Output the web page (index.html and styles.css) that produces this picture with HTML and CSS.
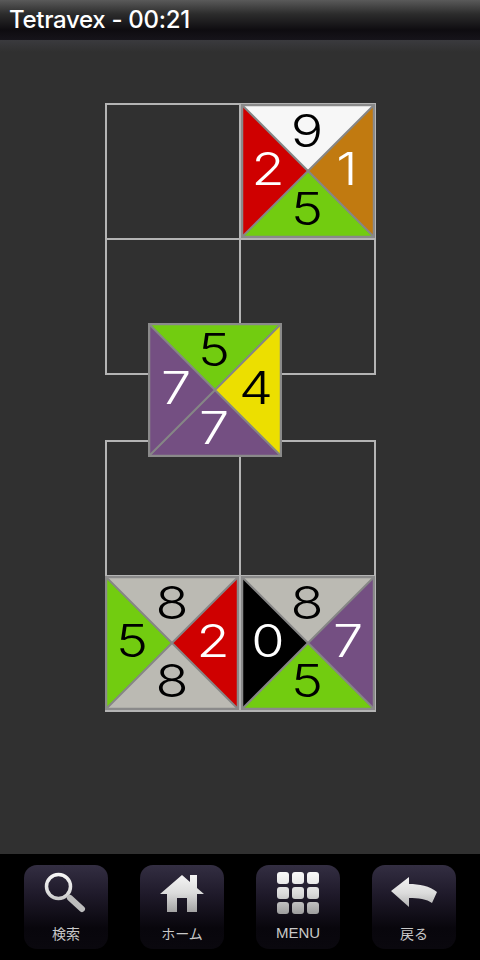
FILE: index.html
```html
<!DOCTYPE html>
<html lang="ja">
<head>
<meta charset="utf-8">
<title>Tetravex</title>
<link rel="stylesheet" href="styles.css">
</head>
<body>
<div class="app">
  <header class="titlebar"><h1 class="title">Tetravex - 00:21</h1></header>
  <main class="game">
    <section class="board">
      <div class="cell"></div>
      <div class="cell">
        <svg class="tile" viewBox="0 0 134 134">
          <polygon class="c-white" points="0,0 134,0 67,67"/><polygon class="c-orange" points="134,0 134,134 67,67"/><polygon class="c-green" points="134,134 0,134 67,67"/><polygon class="c-red" points="0,134 0,0 67,67"/>
          <path class="seam" d="M0 0L134 134M134 0L0 134"/><rect class="edge" x="1" y="1" width="132" height="132"/>
          <text class="n dark" x="66" y="43">9</text><text class="n light" x="106" y="81">1</text><text class="n dark" x="66" y="121">5</text><text class="n light" x="27" y="81">2</text>
        </svg>
      </div>
      <div class="cell"></div>
      <div class="cell"></div>
    </section>
    <section class="board">
      <div class="cell"></div>
      <div class="cell"></div>
      <div class="cell">
        <svg class="tile" viewBox="0 0 134 134">
          <polygon class="c-grey" points="0,0 134,0 67,67"/><polygon class="c-red" points="134,0 134,134 67,67"/><polygon class="c-grey" points="134,134 0,134 67,67"/><polygon class="c-green" points="0,134 0,0 67,67"/>
          <path class="seam" d="M0 0L134 134M134 0L0 134"/><rect class="edge" x="1" y="1" width="132" height="132"/>
          <text class="n dark" x="67" y="43">8</text><text class="n light" x="108" y="81">2</text><text class="n dark" x="67" y="121">8</text><text class="n dark" x="27" y="81">5</text>
        </svg>
      </div>
      <div class="cell">
        <svg class="tile" viewBox="0 0 134 134">
          <polygon class="c-grey" points="0,0 134,0 67,67"/><polygon class="c-purple" points="134,0 134,134 67,67"/><polygon class="c-green" points="134,134 0,134 67,67"/><polygon class="c-black" points="0,134 0,0 67,67"/>
          <path class="seam" d="M0 0L134 134M134 0L0 134"/><rect class="edge" x="1" y="1" width="132" height="132"/>
          <text class="n dark" x="66" y="43">8</text><text class="n light" x="107" y="81">7</text><text class="n dark" x="66" y="121">5</text><text class="n light" x="27" y="81">0</text>
        </svg>
      </div>
    </section>
    <svg class="tile floating" viewBox="0 0 134 134">
      <polygon class="c-green" points="0,0 134,0 67,67"/><polygon class="c-yellow" points="134,0 134,134 67,67"/><polygon class="c-purple" points="134,134 0,134 67,67"/><polygon class="c-purple" points="0,134 0,0 67,67"/>
      <path class="seam" d="M0 0L134 134M134 0L0 134"/><rect class="edge" x="1" y="1" width="132" height="132"/>
      <text class="n dark" x="66" y="43">5</text><text class="n dark" x="108" y="81">4</text><text class="n light" x="66" y="121">7</text><text class="n light" x="28" y="81">7</text>
    </svg>
  </main>
  <nav class="toolbar">
    <a class="tool">
      <svg class="icon" viewBox="0 0 84 60">
        <defs>
          <linearGradient id="metal" gradientUnits="userSpaceOnUse" x1="0" y1="6" x2="0" y2="50">
            <stop offset="0" stop-color="#fafafa"/><stop offset="0.5" stop-color="#dcdcdc"/><stop offset="1" stop-color="#9a9a9a"/>
          </linearGradient>
        </defs>
        <circle class="lens" cx="34.500" cy="21.500" r="12"/>
        <path class="handle" d="M46 33L58 44"/>
      </svg>
      <span class="label">検索</span>
    </a>
    <a class="tool">
      <svg class="icon" viewBox="0 0 84 60">
        <path class="metal" d="M20 29L42 10L50 17V10H57V23L64 29H57V47H47V33H37V47H27V29Z"/>
      </svg>
      <span class="label">ホーム</span>
    </a>
    <a class="tool">
      <svg class="icon" viewBox="0 0 84 60">
        <rect class="metal" x="21" y="7" width="12" height="12" rx="3"/><rect class="metal" x="36" y="7" width="12" height="12" rx="3"/><rect class="metal" x="51" y="7" width="12" height="12" rx="3"/>
        <rect class="metal" x="21" y="22" width="12" height="12" rx="3"/><rect class="metal" x="36" y="22" width="12" height="12" rx="3"/><rect class="metal" x="51" y="22" width="12" height="12" rx="3"/>
        <rect class="metal" x="21" y="37" width="12" height="12" rx="3"/><rect class="metal" x="36" y="37" width="12" height="12" rx="3"/><rect class="metal" x="51" y="37" width="12" height="12" rx="3"/>
      </svg>
      <span class="label label-latin">MENU</span>
    </a>
    <a class="tool">
      <svg class="icon" viewBox="0 0 84 60">
        <path class="metal" d="M19 26L37 12V19C47 19 58 21 65 27L60 38C55 34 46 33 37 33V42Z"/>
      </svg>
      <span class="label">戻る</span>
    </a>
  </nav>
</div>
</body>
</html>
```

FILE: styles.css
```css
* { box-sizing: border-box; }
html, body { margin: 0; padding: 0; background: #000; }
.app {
  width: 480px;
  height: 960px;
  display: flex;
  flex-direction: column;
  overflow: hidden;
}
.titlebar {
  height: 40px;
  flex: none;
  padding-left: 9px;
  display: flex;
  align-items: center;
  background: linear-gradient(#5a5a5a 0, #2c2c2c 14px, #0e0c10 30px, #16141a 40px);
}
.title {
  margin: 0;
  font: 500 24px/1 "Inter", "Liberation Sans", sans-serif;
  letter-spacing: -0.3px;
  color: #fff;
}
.game {
  flex: 1;
  position: relative;
  padding: 63px 0 0 105px;
  background: linear-gradient(#3a3a3e 0, #303030 12px);
  display: flex;
  flex-direction: column;
  gap: 65px;
}
.board {
  width: 271px;
  display: grid;
  grid-template-columns: 134px 135px;
  grid-auto-rows: 135px;
  border-right: 2px solid #b4b4b4;
  border-bottom: 2px solid #b4b4b4;
}
.cell {
  border-left: 2px solid #b4b4b4;
  border-top: 2px solid #b4b4b4;
}
.tile {
  display: block;
  width: 134px;
  height: 134px;
}
.cell .tile { margin-top: -1px; }
.cell:nth-child(odd) .tile { margin-left: -2px; }
.floating {
  position: absolute;
  left: 148px;
  top: 283px;
}
.c-white { fill: #f7f7f7; }
.c-orange { fill: #c17a10; }
.c-green { fill: #72cc10; }
.c-red { fill: #cf0000; }
.c-grey { fill: #bbbab3; }
.c-purple { fill: #744f82; }
.c-black { fill: #000; }
.c-yellow { fill: #ecdf00; }
.seam { fill: none; stroke: #868686; stroke-width: 2; }
.edge { fill: none; stroke: #8a8a8a; stroke-width: 2.5; }
.n {
  font: 300 45px "Inter", "Liberation Sans", sans-serif;
  text-anchor: middle;
  transform-box: fill-box;
  transform-origin: center;
  transform: scaleX(1.2);
}
.dark { fill: #000; }
.light { fill: #fff; }
.toolbar {
  height: 106px;
  flex: none;
  background: #000;
  padding: 11px 24px 0;
  display: flex;
  justify-content: space-between;
  align-items: flex-start;
}
.tool {
  width: 84px;
  height: 84px;
  border-radius: 13px;
  background: linear-gradient(#332e42 0, #1f1a2a 35%, #08060c 75%, #0a080e 100%);
  display: flex;
  flex-direction: column;
  align-items: center;
}
.icon {
  display: block;
  width: 84px;
  height: 60px;
}
.metal { fill: url(#metal); }
.lens { fill: none; stroke: url(#metal); stroke-width: 3.5; }
.handle { fill: none; stroke: #bdbdbd; stroke-width: 6; stroke-linecap: round; }
.label {
  font: 400 14px/18px "Liberation Sans", "Noto Sans CJK JP", sans-serif;
  color: #c8c8c8;
}
.label-latin { font-size: 15px; line-height: 16px; }
```
